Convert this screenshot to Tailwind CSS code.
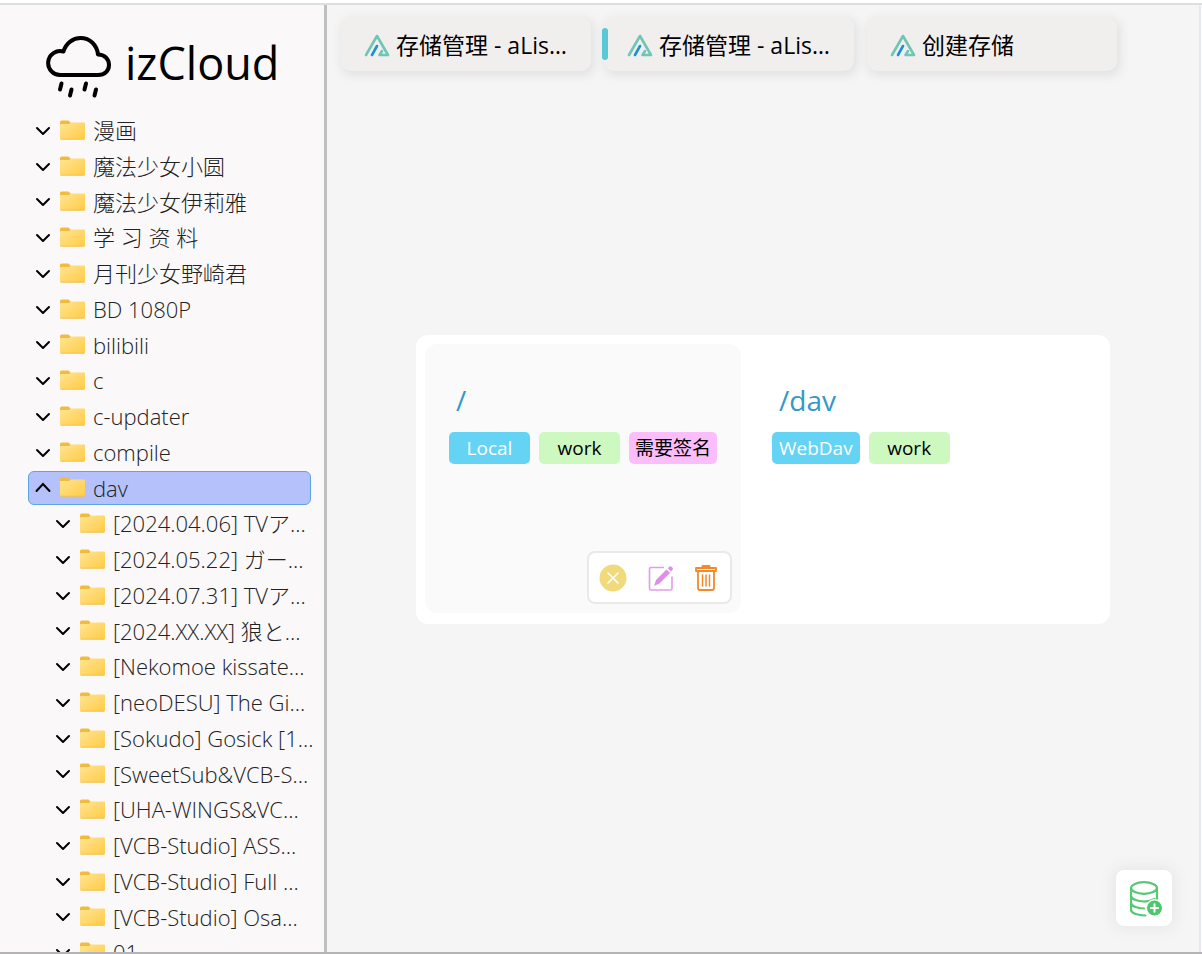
<!DOCTYPE html>
<html lang="zh-CN">
<head>
<meta charset="utf-8">
<meta name="viewport" content="width=device-width, initial-scale=1">
<title>izCloud</title>
<script src="https://cdn.jsdelivr.net/npm/@tailwindcss/browser@4"></script>
</head>
<body class="font-['Open_Sans','Noto_Sans_CJK_SC',sans-serif] text-black">
<svg class="absolute size-0" aria-hidden="true">
  <defs>
    <linearGradient id="fold" x1="0" y1="0" x2="1" y2="1"><stop offset="0" stop-color="#ffe594"/><stop offset="1" stop-color="#ffcb45"/></linearGradient>
    <symbol id="folder" viewBox="0 0 25 20">
      <path d="M0 2Q0 .5 1.5 .5H8.5L11 3H23.5Q25 3 25 4.500V8H0Z" fill="#f2bb3c"/>
      <path d="M0 5Q0 4 1 4H9L11 2.500H24Q25 2.500 25 3.500V18Q25 19.500 23.500 19.500H1.500Q0 19.500 0 18Z" fill="url(#fold)"/>
      <path d="M.5 19.200H24.500" stroke="#efb93c" stroke-width=".7"/>
    </symbol>
    <symbol id="down" viewBox="0 0 16 16"><path d="M2 5l6 6 6-6" fill="none" stroke="currentColor" stroke-width="2" stroke-linecap="round" stroke-linejoin="round"/></symbol>
    <symbol id="up" viewBox="0 0 16 16"><path d="M1.500 11l6.500-7 6.500 7" fill="none" stroke="currentColor" stroke-width="2" stroke-linecap="round" stroke-linejoin="miter"/></symbol>
    <symbol id="alist" viewBox="0 0 26 24">
      <g fill="none" stroke-width="2.600" stroke-linecap="round" stroke-linejoin="round">
        <path d="M2 22L13 3L24 22H15.500L18 18" stroke="#70c6b5"/>
        <path d="M8 22L13 13" stroke="#1e90d6"/>
      </g>
    </symbol>
  </defs>
</svg>
<div class="flex h-screen flex-col overflow-hidden border-b-2 border-[#b4b4b4] bg-white pt-[3px]">
  <div class="flex min-h-0 flex-1 border-t-2 border-[#dedede]">
    <aside class="flex w-[327px] shrink-0 flex-col overflow-hidden border-r-3 border-[#c0bfc0] bg-[#faf8f9]">
      <header class="flex h-[108px] shrink-0 items-start gap-[14px] pt-[31px] pl-[46px]">
        <svg class="h-[62px] w-[65px]" viewBox="0 0 65 62" fill="none" stroke="#000" stroke-width="4" stroke-linecap="round" stroke-linejoin="round" aria-hidden="true">
          <path d="M15 39A12 12 0 1 1 17.500 15.500C20 7 27 2 34.500 2C44 2 51 9 52 18.500C58.500 18.500 63 23 63 29C63 35 58.500 39 52 39Z"/>
          <path d="M15.500 47.500l-1.500 6M25.500 53.500l-1.500 6M40 47.500l-1.500 6M50 53.500l-1.500 6"/>
        </svg>
        <h1 class="pt-1 text-[45px] leading-none">izCloud</h1>
      </header>
      <ul id="tree" class="pr-[13px] pl-7 text-[22px] leading-relaxed font-light text-[#222]"></ul>
    </aside>
    <main class="relative mr-[1px] flex min-w-0 flex-1 flex-col border-r-2 border-[#e3e8f8] bg-[#f5f5f5]">
      <nav class="flex gap-[13px] pt-3 pl-[14px] text-[23px]">
        <button class="flex h-[54px] w-[250px] items-center gap-[6px] rounded-[10px] bg-[#f1eeee] pt-[2px] pl-[23px] shadow-[2px_3px_10px_2px_#e4e3e3]"><svg class="h-6 w-[26px] shrink-0"><use href="#alist"/></svg><span class="whitespace-nowrap">存储管理 - aLis…</span></button>
        <button class="relative flex h-[54px] w-[250px] items-center gap-[6px] rounded-[10px] bg-[#f1eeee] pt-[2px] pl-[23px] shadow-[2px_3px_10px_2px_#e4e3e3]" aria-current="page"><i class="absolute top-[11px] -left-[2px] h-8 w-[6px] rounded-[3px] bg-[#5bc8d5]"></i><svg class="h-6 w-[26px] shrink-0"><use href="#alist"/></svg><span class="whitespace-nowrap">存储管理 - aLis…</span></button>
        <button class="flex h-[54px] w-[250px] items-center gap-[6px] rounded-[10px] bg-[#f1eeee] pt-[2px] pl-[23px] shadow-[2px_3px_10px_2px_#e4e3e3]"><svg class="h-6 w-[26px] shrink-0"><use href="#alist"/></svg><span class="whitespace-nowrap">创建存储</span></button>
      </nav>
      <div class="flex flex-1 items-center justify-center pb-16">
        <section class="flex w-[694px] gap-[7px] rounded-xl bg-white p-[9px] pb-[11px]">
          <article class="flex h-[269px] w-[316px] flex-col rounded-xl bg-[#fafafa] px-6 pt-[35px] pb-[9px]">
            <h2 class="px-[7px] text-[28px] leading-[42px] text-[#3498c9]">/</h2>
            <div class="mt-[11px] flex gap-[9px] text-[19px]">
              <span class="flex h-8 min-w-[81px] items-center justify-center rounded-[5px] bg-[#65d3f3] px-[7px] whitespace-nowrap font-medium text-white">Local</span>
              <span class="flex h-8 min-w-[81px] items-center justify-center rounded-[5px] bg-[#cdf8c0] px-[7px] whitespace-nowrap">work</span>
              <span class="flex h-8 min-w-[81px] items-center justify-center rounded-[5px] bg-[#fbbefb] px-[7px] whitespace-nowrap">需要签名</span>
            </div>
            <div class="mt-auto -mr-[15px] flex h-[53px] w-[145px] items-center justify-between self-end rounded-lg border-2 border-[#e9e9e9] bg-white pr-3 pl-[10px]">
              <button aria-label="停用"><svg class="size-7" viewBox="0 0 28 28"><circle cx="14" cy="14" r="13.500" fill="#f0da7c"/><path d="M9 9l10 10M19 9L9 19" stroke="#fff" stroke-width="1.600" stroke-linecap="round"/></svg></button>
              <button aria-label="编辑"><svg class="size-[26px]" viewBox="0 0 26 26"><path d="M15.500 2.500H3Q1.500 2.500 1.500 4V23.500Q1.500 25 3 25H22.500Q24 25 24 23.500V12" fill="none" stroke="#e59aec" stroke-width="1.600" stroke-linecap="round"/><path d="M6 21L8 15L18.500 4.500L22 8L11.500 18.500Z" fill="#dc90e6"/><path d="M19.800 3.300L21.500 1.500Q22.500 .8 23.500 1.800L24.500 2.800Q25.500 3.800 24.500 4.800L23 6.500Z" fill="#dc90e6"/></svg></button>
              <button aria-label="删除"><svg class="h-7 w-6" viewBox="0 0 24 28" fill="none" stroke="#f3892b" stroke-width="1.800" stroke-linejoin="round" stroke-linecap="round"><path d="M2 4H22V7H2ZM8.500 3.500V2H15.500V3.500M4 7.500V24Q4 26 6 26H18Q20 26 20 24V7.500"/><path d="M8.500 11V22M12 11V22M15.500 11V22" stroke-width="1.500"/></svg></button>
            </div>
          </article>
          <article class="flex h-[269px] w-[316px] flex-col rounded-xl px-6 pt-[35px] pb-[9px]">
            <h2 class="px-[7px] text-[28px] leading-[42px] text-[#3498c9]">/dav</h2>
            <div class="mt-[11px] flex gap-[9px] text-[19px]">
              <span class="flex h-8 min-w-[81px] items-center justify-center rounded-[5px] bg-[#65d3f3] px-[7px] whitespace-nowrap font-medium text-white">WebDav</span>
              <span class="flex h-8 min-w-[81px] items-center justify-center rounded-[5px] bg-[#cdf8c0] px-[7px] whitespace-nowrap">work</span>
            </div>
          </article>
        </section>
      </div>
      <button class="absolute right-[27px] bottom-[26px] flex size-14 items-center justify-center rounded-lg bg-white pt-[2px] pl-[3px] shadow-[0_0_14px_4px_#e9e9e9]" aria-label="添加存储">
        <svg class="h-9 w-8" viewBox="0 0 32 36" fill="none" stroke="#56c874" stroke-width="2.200" stroke-linecap="round"><ellipse cx="14" cy="7" rx="13" ry="5.800"/><path d="M1 7V28.500C1 32 7 34.500 15.500 34.500M27 7V18M1 14.500C1 18 7 20.500 14 20.500C18 20.500 22 19.500 24.500 18M1 21.500C1 25 7 27.500 14 27.500"/><circle cx="24.500" cy="27" r="9" fill="#fff" stroke="none"/><circle cx="24.500" cy="27" r="7.500" fill="#4cc76a" stroke="none"/><path d="M24.500 23.300V30.700M20.800 27H28.200" stroke="#fff" stroke-width="2"/></svg>
      </button>
    </main>
  </div>
</div>
<script>
const roots = ["漫画","魔法少女小圆","魔法少女伊莉雅","学 习 资 料","月刊少女野崎君","BD 1080P","bilibili","c","c-updater","compile"];
const children = ["[2024.04.06] TVア…","[2024.05.22] ガー…","[2024.07.31] TVア…","[2024.XX.XX] 狼と…","[Nekomoe kissate…","[neoDESU] The Gi…","[Sokudo] Gosick [1…","[SweetSub&amp;VCB-S…","[UHA-WINGS&amp;VC…","[VCB-Studio] ASS…","[VCB-Studio] Full …","[VCB-Studio] Osa…","01"];
const row = (name, icon, box) => `<li class="flex h-[1lh] items-center"><button class="flex h-[34px] w-full items-center rounded-md border text-left ${box}"><svg class="mr-[9px] size-4 shrink-0 text-black"><use href="#${icon}"/></svg><svg class="mr-2 mb-[2px] h-5 w-[25px] shrink-0"><use href="#folder"/></svg><span class="whitespace-nowrap">${name}</span></button></li>`;
document.getElementById("tree").innerHTML =
  roots.map(n => row(n, "down", "border-transparent pl-[6px]")).join("") +
  row("dav", "up", "border-[#5aa5e8] bg-[#b4c1fb] pl-[6px]") +
  children.map(n => row(n, "down", "border-transparent pl-[26px]")).join("");
</script>
</body>
</html>
